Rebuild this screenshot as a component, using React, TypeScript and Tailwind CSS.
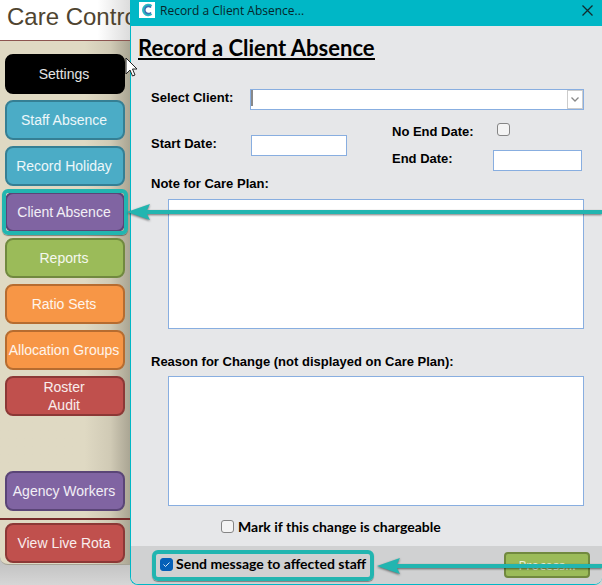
import type { ReactNode } from "react";

const sans = "font-['Liberation_Sans',Arial,sans-serif]";
const human = "font-[Lato,Carlito,Calibri,sans-serif]";

const tones = {
  black: "bg-black border-black",
  blue: "bg-[#4bacc6] border-[#357f94]",
  purple: "bg-[#8064a2] border-[#5a4577]",
  green: "bg-[#9bbb59] border-[#71893f]",
  orange: "bg-[#f79646] border-[#b66c30]",
  red: "bg-[#c0504d] border-[#8c3836]",
};

function NavButton({ tone, highlighted, children }: { tone: keyof typeof tones; highlighted?: boolean; children: ReactNode }) {
  return (
    <button
      type="button"
      className={`relative flex h-10 w-full items-center justify-center rounded-lg border-2 pr-0.5 text-[14px] leading-[18px] whitespace-nowrap text-white/90 ${tones[tone]}`}
    >
      {children}
      {highlighted && (
        <span className="absolute -inset-[5px] rounded-md border-4 border-[#22b5b0] shadow-[0_1px_1px_#0006]" />
      )}
    </button>
  );
}

function Arrow({ className }: { className: string }) {
  return (
    <div className={`pointer-events-none absolute right-0 flex h-4 items-center drop-shadow-[0_1px_1px_#0008] ${className}`}>
      <svg width="24" height="16" viewBox="0 0 24 16" className="shrink-0" aria-hidden="true">
        <path d="M0 8 23 0 20 6V10L23 16Z" fill="#22b5b0" />
      </svg>
      <div className="-ml-1 h-1 flex-1 bg-[#22b5b0]" />
    </div>
  );
}

function Tick({ id, checked }: { id: string; checked?: boolean }) {
  return (
    <span className="relative flex size-[13px] shrink-0">
      <input
        id={id}
        type="checkbox"
        defaultChecked={checked}
        className="peer size-[13px] appearance-none rounded-[3px] border border-[#858585] bg-[#f4f4f4] checked:border-[#0560b8] checked:bg-[#0560b8]"
      />
      <svg viewBox="0 0 13 13" className="pointer-events-none absolute inset-0 hidden peer-checked:block" aria-hidden="true">
        <path d="m3.5 6.5 2 2 4-4" fill="none" stroke="#d5e6f7" strokeWidth="1" />
      </svg>
    </span>
  );
}

const field = "border border-[#88aee0] bg-white outline-none";

export default function App() {
  return (
    <div className={`relative flex items-start bg-linear-to-b from-[#bcbcbc] from-95% to-[#d6d6d6] ${sans}`}>
      <aside className="w-[130px] shrink-0">
        <header className="h-10 bg-linear-to-r from-white from-75% to-[#dcdcdc] pl-[7px]">
          <h1 className="text-[24px] leading-[34px] whitespace-nowrap text-[#4f4430]">Care Control</h1>
        </header>
        <div className="rounded-bl-lg border-t border-b border-t-[#8c5550] border-b-[#a5a294] bg-linear-to-r from-[#dfd9c3] from-65% via-[#d0cab5] via-85% to-[#aaa593]">
          <nav className="flex flex-col gap-1.5 pt-[13px] pr-[5px] pl-[5px]">
            <NavButton tone="black">Settings</NavButton>
            <NavButton tone="blue">Staff Absence</NavButton>
            <NavButton tone="blue">Record Holiday</NavButton>
            <NavButton tone="purple" highlighted>Client Absence</NavButton>
            <NavButton tone="green">Reports</NavButton>
            <NavButton tone="orange">Ratio Sets</NavButton>
            <NavButton tone="orange">Allocation Groups</NavButton>
            <NavButton tone="red">Roster<br />Audit</NavButton>
          </nav>
          <div className="mt-[55px] border-b-2 border-[#762b2a] px-[5px] pb-[7px]">
            <NavButton tone="purple">Agency Workers</NavButton>
          </div>
          <div className="px-[5px] pt-[3px] pb-px">
            <NavButton tone="red">View Live Rota</NavButton>
          </div>
        </div>
      </aside>

      <section role="dialog" aria-labelledby="form-title" className="relative min-w-0 flex-1 rounded-b-lg border-b border-l border-[#00b7c6] bg-[#e6e7e9]">
        <header className="flex h-[26px] items-start bg-[#00b7c6] pl-2">
          <span className="mt-0.5 flex size-4 items-center justify-center bg-white">
            <svg width="14" height="14" viewBox="0 0 14 14" fill="none" aria-hidden="true">
              <path d="M11.5 3.2A5 5 0 1 0 11.5 10.8" stroke="#27b8c2" strokeWidth="2.4" />
              <path d="M11 4.5A3.6 3.6 0 1 0 11 9.5" stroke="#3472b5" strokeWidth="1.6" />
            </svg>
          </span>
          <span className="ml-[5px] font-['Open_Sans',sans-serif] text-[12px] leading-[22px] text-[#06262a]">Record a Client Absence...</span>
          <button type="button" aria-label="Close" className="mt-[5px] mr-[9px] ml-auto">
            <svg width="11" height="11" viewBox="0 0 11 11" aria-hidden="true">
              <path d="m.5.5 10 10m0-10-10 10" stroke="#102b2e" strokeWidth="1.3" />
            </svg>
          </button>
        </header>

        <form>
          <h2 id="form-title" className={`ml-[7px] h-[63px] pt-2 text-[22px] leading-7 font-bold text-black ${human}`}>
            <span className="inline-block h-[26px] border-b-2 border-black">Record a Client Absence</span>
          </h2>

          <div className="pr-[18px] pl-5 text-[13px] leading-[18px] font-bold text-black">
            <div className="flex">
              <label htmlFor="client" className="w-[99px]">Select Client:</label>
              <div className="relative flex-1">
                <select id="client" className={`block h-[21px] w-full appearance-none ${field}`} />
                <span className="pointer-events-none absolute top-px left-px h-4 w-0.5 bg-[#888]" />
                <span className="pointer-events-none absolute top-px right-px flex h-[19px] w-4 items-center justify-center border border-[#ccc] bg-white">
                  <svg width="8" height="5" viewBox="0 0 8 5" fill="none" aria-hidden="true">
                    <path d="m.5.5 3.5 3.5 3.5-3.5" stroke="#888" strokeWidth="1.3" />
                  </svg>
                </span>
              </div>
            </div>

            <div className="mt-[13px] flex">
              <div className="flex items-start pt-3">
                <label htmlFor="start" className="w-[100px]">Start Date:</label>
                <input id="start" className={`h-[21px] w-24 ${field}`} />
              </div>
              <div className="ml-auto w-[192px]">
                <div className="flex">
                  <label htmlFor="no-end" className="w-[105px]">No End Date:</label>
                  <Tick id="no-end" />
                </div>
                <div className="mt-[9px] flex">
                  <label htmlFor="end" className="w-[101px]">End Date:</label>
                  <input id="end" className={`h-[21px] w-[89px] ${field}`} />
                </div>
              </div>
            </div>

            <label htmlFor="note" className="mt-1 block">Note for Care Plan:</label>
            <div className="mt-1.5 pl-[17px]">
              <textarea id="note" className={`block h-[130px] w-full resize-none ${field}`} />
            </div>
            <label htmlFor="reason" className="mt-6 block">Reason for Change (not displayed on Care Plan):</label>
            <div className="mt-[5px] pl-[17px]">
              <textarea id="reason" className={`block h-[130px] w-full resize-none ${field}`} />
            </div>
          </div>

          <div className={`mt-[10px] flex h-[30px] items-start pt-1 pl-[90px] text-[14px] font-bold ${human}`}>
            <Tick id="chargeable" />
            <label htmlFor="chargeable" className="ml-1 leading-[14px]">Mark if this change is chargeable</label>
          </div>

          <footer className="flex h-[38px] items-center justify-between rounded-b-lg bg-[#d0d1d2] pr-3 pl-[21px]">
            <div className={`flex h-[31px] items-center rounded-md border-4 border-[#22b5b0] pr-1 pb-0.5 pl-1 text-[14px] font-bold shadow-[0_1px_1px_#0006] ${human}`}>
              <Tick id="send" checked />
              <label htmlFor="send" className="ml-[3px] leading-[14px]">Send message to affected staff</label>
            </div>
            <button type="button" className="h-[26px] w-[86px] rounded-sm border-2 border-[#71893f] bg-[#9bbb59] font-['Open_Sans',sans-serif] text-[13px] leading-5 text-white/80">Process...</button>
          </footer>
        </form>

        <Arrow className="top-[204px] -left-1" />
        <Arrow className="top-[558px] left-[246px]" />
        <svg width="14" height="20" viewBox="0 0 14 20" className="absolute top-[57px] -left-[6px]" aria-hidden="true">
          <path d="M1 1v16l4-4 2.5 6 2.5-1-2.5-6H12Z" fill="#fff" stroke="#222" />
        </svg>
      </section>
    </div>
  );
}
